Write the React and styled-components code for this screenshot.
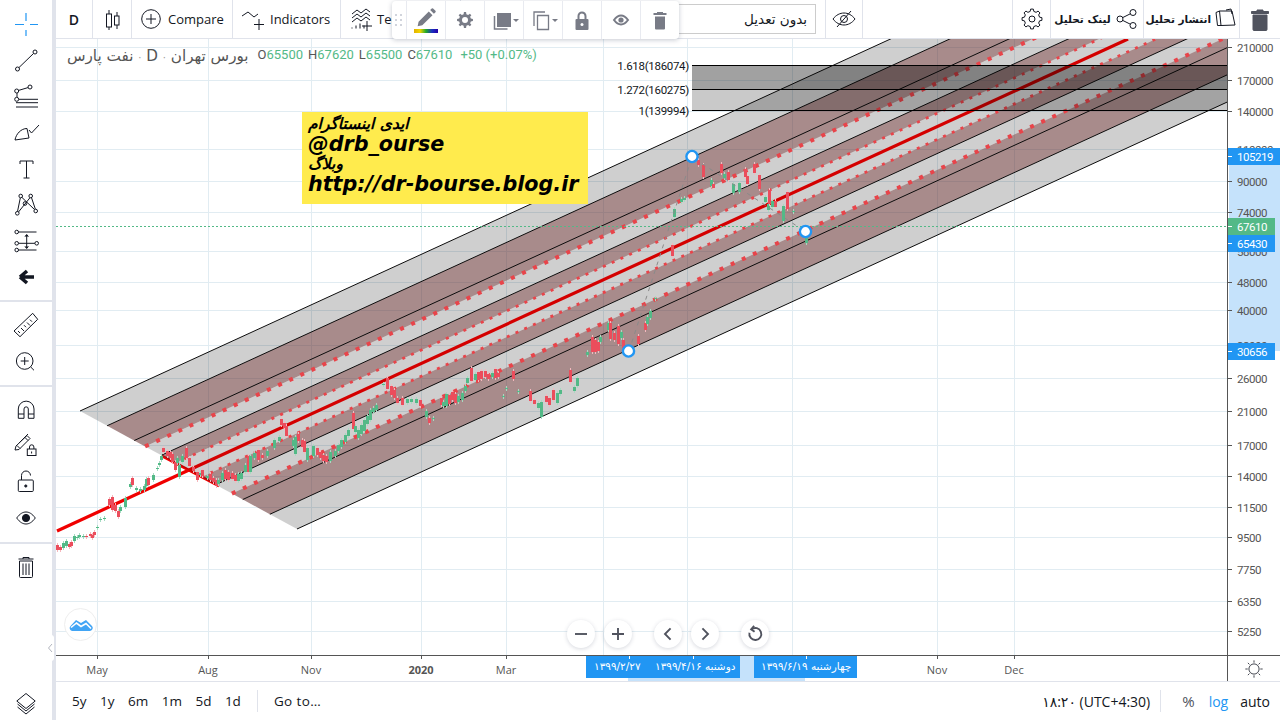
import React from 'react'
import styled, { createGlobalStyle } from 'styled-components'

const GREEN = '#53b987'
const RED = '#eb4d5c'
const BLUE = '#2196f3'

const priceTicks = [
  [47, '210000'], [80, '170000'], [111, '140000'], [149, '110000'], [181, '90000'], [212, '74000'],
  [251, '58000'], [282, '48000'], [310, '40000'], [345, '32000'], [378, '26000'], [411, '21000'],
  [445, '17000'], [476, '14000'], [507, '11500'], [537, '9500'], [569, '7750'], [601, '6350'], [631, '5250'],
]
const priceBadges = [
  { top: 148, h: 17, w: 53, color: BLUE, label: '105219' },
  { top: 218, h: 17, w: 47, color: GREEN, label: '67610' },
  { top: 235, h: 17, w: 47, color: BLUE, label: '65430' },
  { top: 343, h: 17, w: 47, color: BLUE, label: '30656' },
]
const timeTicks = [
  [97, 'May'], [208, 'Aug'], [311, 'Nov'], [421, '2020', true], [506, 'Mar'], [603, ''], [687, ''], [792, ''], [937, 'Nov'], [1014, 'Dec'],
]
const fibLevels = [
  [65.5, '1.618(186074)'],
  [89.5, '1.272(160275)'],
  [110.5, '1(139994)'],
]

// fork geometry: every channel line starts on the base line and runs up with the same slope
const SLOPE = 0.459
const basePoint = t => [80 + 217 * t, 411 + 118 * t]
const far = ([x, y]) => [x + 2000, y - 2000 * SLOPE]
const bands = [
  [0, 0.125, 'grey'], [0.125, 0.3, 'brown'], [0.3, 0.375, 'grey'], [0.375, 0.44, 'brown'], [0.44, 0.56, 'grey'],
  [0.56, 0.625, 'brown'], [0.625, 0.7, 'grey'], [0.7, 0.875, 'brown'], [0.875, 1, 'grey'],
]
const blackLines = [0, 0.125, 0.25, 0.375, 0.625, 0.75, 0.875, 1]
const dotted = [
  [0.3, 4, '4 8.2'], [0.44, 2.8, '3 6.6'], [0.56, 2.8, '3 6.6'], [0.7, 4, '4 8.2'],
]

const candles = [
  [57, 545, 550, 'r'], [60, 547, 550, 'r'], [63, 543, 548, 'g'], [66, 541, 546, 'g'], [69, 544, 547, 'r'], [71, 542, 546, 'r'],
  [74, 536, 541, 'g'], [77, 537, 538, 'g'], [79, 535, 537, 'g'], [83, 536, 537, 'g'], [86, 536, 537, 'r'], [90, 534, 536, 'r'],
  [92, 535, 538, 'r'], [94, 532, 535, 'r'], [97, 527, 528, 'g'], [100, 519, 520, 'g'], [104, 518, 519, 'g'],
  [109, 499, 505, 'r'], [112, 497, 510, 'r'], [115, 505, 511, 'r'], [118, 511, 517, 'r'], [120, 507, 511, 'g'], [125, 498, 507, 'g'],
  [130, 484, 487, 'g'], [132, 478, 485, 'r'], [136, 488, 490, 'g'], [140, 489, 491, 'g'], [144, 486, 490, 'g'], [146, 479, 486, 'g'],
  [148, 478, 485, 'r'], [153, 475, 480, 'g'], [157, 468, 469, 'g'], [159, 463, 465, 'g'], [161, 456, 460, 'g'], [163, 448, 452, 'r'],
  [167, 451, 456, 'r'], [170, 452, 458, 'r'], [172, 454, 462, 'r'], [175, 462, 470, 'r'], [177, 458, 463, 'g'], [179, 465, 477, 'g'],
  [182, 456, 462, 'g'], [186, 448, 458, 'r'], [189, 458, 466, 'r'], [193, 467, 471, 'r'], [197, 472, 480, 'r'], [200, 473, 475, 'g'],
  [202, 470, 476, 'r'], [207, 476, 478, 'g'], [210, 474, 480, 'r'], [213, 478, 482, 'r'], [216, 480, 486, 'r'], [218, 480, 484, 'g'],
  [222, 473, 480, 'g'], [225, 470, 479, 'r'], [228, 472, 480, 'r'], [232, 473, 479, 'r'], [235, 475, 481, 'r'], [238, 474, 481, 'g'],
  [241, 473, 479, 'g'], [245, 465, 472, 'g'], [248, 456, 472, 'r'], [250, 456, 472, 'g'], [254, 453, 458, 'g'], [258, 450, 460, 'r'],
  [262, 455, 458, 'r'], [267, 451, 456, 'g'], [274, 440, 448, 'g'], [279, 437, 441, 'g'], [281, 419, 425, 'r'], [284, 423, 428, 'r'],
  [286, 426, 436, 'r'], [293, 440, 446, 'g'], [295, 437, 454, 'g'], [298, 434, 441, 'r'], [302, 440, 447, 'r'], [304, 441, 452, 'r'],
  [307, 448, 460, 'g'], [313, 446, 456, 'g'], [317, 448, 455, 'r'], [320, 452, 458, 'r'], [323, 455, 461, 'r'], [326, 456, 462, 'r'],
  [330, 452, 461, 'g'], [335, 451, 456, 'g'], [338, 445, 451, 'g'], [341, 440, 447, 'g'], [345, 435, 442, 'g'],
  [348, 430, 436, 'g'], [353, 413, 429, 'r'], [355, 426, 432, 'g'], [358, 430, 438, 'g'], [361, 425, 434, 'g'], [364, 420, 431, 'g'],
  [367, 416, 424, 'g'], [370, 410, 420, 'g'], [373, 408, 412, 'g'], [376, 405, 410, 'g'], [383, 384, 385, 'g'], [387, 378, 389, 'r'],
  [391, 386, 395, 'r'], [394, 390, 398, 'r'], [397, 398, 403, 'r'], [402, 398, 405, 'r'], [407, 399, 403, 'g'], [411, 399, 402, 'g'],
  [416, 399, 403, 'g'], [420, 400, 406, 'r'], [426, 411, 417, 'g'], [429, 418, 423, 'r'], [433, 418, 419, 'g'],
  [441, 398, 405, 'r'], [443, 402, 406, 'g'], [446, 394, 406, 'g'], [449, 395, 404, 'r'], [452, 392, 400, 'r'], [455, 394, 403, 'r'],
  [458, 396, 402, 'g'], [462, 393, 400, 'g'], [465, 386, 391, 'g'], [467, 378, 383, 'g'], [471, 368, 381, 'r'], [475, 374, 380, 'g'],
  [478, 372, 380, 'r'], [481, 371, 379, 'r'], [485, 371, 377, 'r'], [488, 374, 379, 'r'], [492, 373, 377, 'g'], [495, 369, 378, 'r'],
  [498, 373, 377, 'r'], [503, 396, 397, 'g'], [506, 388, 389, 'g'], [513, 371, 379, 'r'], [518, 391, 392, 'g'],
  [530, 391, 401, 'r'], [534, 400, 404, 'r'], [538, 403, 408, 'g'], [541, 402, 417, 'g'], [546, 396, 402, 'r'], [549, 398, 405, 'r'],
  [553, 390, 400, 'r'], [557, 393, 403, 'g'], [560, 390, 394, 'g'], [570, 370, 382, 'r'], [574, 387, 391, 'g'], [577, 378, 386, 'g'],
  [587, 352, 355, 'g'], [592, 337, 352, 'r'], [595, 340, 352, 'r'], [598, 342, 351, 'r'], [600, 337, 342, 'g'],
  [608, 323, 330, 'g'], [610, 323, 339, 'r'], [614, 333, 340, 'r'], [618, 326, 344, 'r'], [621, 332, 338, 'g'], [623, 340, 348, 'r'],
  [638, 336, 344, 'r'], [645, 323, 330, 'r'], [647, 317, 324, 'g'], [650, 311, 318, 'g'], [655, 298, 299, 'g'],
  [672, 245, 256, 'r'], [674, 209, 217, 'g'], [681, 199, 202, 'g'], [684, 198, 200, 'g'], [698, 160, 165, 'r'],
  [703, 165, 177, 'r'], [711, 180, 186, 'g'], [713, 184, 188, 'r'], [721, 164, 173, 'r'], [724, 174, 178, 'g'], [728, 172, 180, 'r'],
  [733, 184, 193, 'g'], [739, 183, 192, 'g'], [745, 169, 177, 'r'], [747, 176, 184, 'r'], [754, 164, 173, 'r'], [759, 175, 189, 'r'],
  [765, 197, 202, 'g'], [768, 204, 210, 'g'], [769, 190, 204, 'r'], [772, 201, 207, 'g'], [775, 201, 207, 'r'], [783, 206, 221, 'g'],
  [787, 192, 209, 'r'], [793, 211, 212, 'g'], [806, 238, 243, 'g'],
]

const handles = [[692, 156.5], [628.5, 351], [805.5, 231.5]]

// toothed ring around the middle of a 28 box, for the two settings icons
const gearPath = (rOut, rIn, teeth = 8) => {
  const step = (Math.PI * 2) / teeth
  const pts = []
  for (let i = 0; i < teeth; i++) {
    const a = i * step
    const at = (r, da) => `${(14 + r * Math.cos(a + da)).toFixed(2)} ${(14 + r * Math.sin(a + da)).toFixed(2)}`
    pts.push(at(rIn, -step * 0.3), at(rOut, -step * 0.17), at(rOut, step * 0.17), at(rIn, step * 0.3))
  }
  return 'M' + pts.join('L') + 'Z'
}

const Icon = ({ size = 28, children, ...rest }) => (
  <Svg width={size} height={size} viewBox="0 0 28 28" fill="none" stroke="currentColor" strokeWidth="1" {...rest}>
    {children}
  </Svg>
)

const toolIcons = [
  <>
    <path d="M14 2v8M14 19v6M3 13.500h9M18 13.500h8" stroke={BLUE} strokeWidth="1.200" />
  </>,
  <>
    <circle cx="5.500" cy="22" r="2" />
    <circle cx="23" cy="5" r="2" />
    <path d="M7 20.500 21.500 6.500" />
  </>,
  <>
    <circle cx="4.700" cy="8" r="2" />
    <circle cx="18" cy="4" r="2" />
    <circle cx="4.700" cy="16.300" r="2" />
    <path d="M6.600 7.400 16 4.600M5 10v4M7 16.300h19M4 19.700h22M4 24h22" />
  </>,
  <>
    <path d="M3 21C4 15 9 9.500 15 9.500l2 9.500z" />
    <path d="M17 11l2.500 3L27 6" />
  </>,
  <>
    <path d="M8 9V6h13v3M14.500 6v17M11.500 23h6" />
  </>,
  <>
    <circle cx="8.700" cy="5" r="1.800" />
    <circle cx="18.700" cy="5" r="1.800" />
    <circle cx="13" cy="12.500" r="1.800" />
    <circle cx="5.300" cy="22.300" r="1.800" />
    <circle cx="23.700" cy="20" r="1.800" />
    <path d="M8.300 7 5.500 20.500M10 6.500 22.500 18.500M18 6.700 6.500 21M19.500 6.700 23.300 18" />
  </>,
  <>
    <circle cx="4.700" cy="5" r="1.800" />
    <circle cx="4.700" cy="16.300" r="1.800" />
    <circle cx="24.700" cy="16.300" r="1.800" />
    <circle cx="4.700" cy="23" r="1.800" />
    <path d="M6.500 5h18M6.500 16.300h16.400M6.500 23h18M14.700 8v12" />
    <path d="M13 9.500l1.700-2 1.700 2M13 19.500l1.700 2 1.700-2" fill="currentColor" />
  </>,
  <>
    <path d="M8 14 15 8M8 14l7 6M8 14h14" stroke="#131722" strokeWidth="3.600" />
  </>,
]
const viewIcons = [
  <>
    <path d="M2 20 20.700 2.300l5 6L8 25.700z" />
    <path d="M6 20l2 2M9 17l3 3M12 14.200l2 2M15 11.500l3 3M18 8.700l2 2" />
  </>,
  <>
    <circle cx="12.700" cy="14" r="8.300" />
    <path d="M18.700 20 22 23.300M12.700 10v8M8.700 14h8" />
  </>,
]
const lockIcons = [
  <>
    <path d="M6.300 22.300V13a7.850 7.850 0 0 1 15.700 0v9.300h-5.700V13a2.150 2.150 0 0 0-4.300 0v9.300zM6.300 18H12M16.300 18H22" />
  </>,
  <>
    <path d="M3 18l1-4L15 3.500l3 3L7 17.500zM13 5.500l3 3M5 13.500l3 3M7 11l9-9" />
    <rect x="15.300" y="17" width="8.700" height="6.500" />
    <path d="M17.500 17v-2a2.200 2.200 0 0 1 4.400 0v2M19.600 19.500v2" />
  </>,
  <>
    <rect x="6.300" y="12" width="15" height="11.500" rx="1" />
    <path d="M9.500 12V7.500a4.500 4.500 0 0 1 9 0" />
    <circle cx="13.800" cy="18" r="1.100" fill="currentColor" />
  </>,
  <>
    <path d="M4.700 14C8 9.500 11 8 14 8s6 1.500 9.300 6C20 18.500 17 20 14 20s-6-1.500-9.300-6z" />
    <circle cx="14" cy="14" r="3.600" fill="currentColor" />
  </>,
]
const TrashOutline = () => (
  <Icon>
    <path d="M7.500 8h13v15.500a1 1 0 0 1-1 1h-11a1 1 0 0 1-1-1zM6.500 6h15M11 6V4.500h6V6M11 10.500v11.500M14 10.500v11.500M17 10.500v11.500" />
  </Icon>
)
const Layers = () => (
  <Icon>
    <path d="M14 5.500 23.200 13 14 20.500 4.800 13z" />
    <path d="M5.500 16 14 23 22.500 16M5.500 19 14 26 22.500 19" />
  </Icon>
)

const App = () => {
  return (
    <Page>
      <GlobalStyle />
      <LeftBar>
        <ToolGroup>
          {toolIcons.map((icon, i) => (
            <ToolButton key={i}><Icon>{icon}</Icon></ToolButton>
          ))}
        </ToolGroup>
        <ToolGroup>
          {viewIcons.map((icon, i) => (
            <ToolButton key={i}><Icon>{icon}</Icon></ToolButton>
          ))}
        </ToolGroup>
        <ToolGroup>
          {lockIcons.map((icon, i) => (
            <ToolButton key={i}><Icon>{icon}</Icon></ToolButton>
          ))}
        </ToolGroup>
        <ToolGroup $last>
          <ToolButton><TrashOutline /></ToolButton>
        </ToolGroup>
        <ToolButton><Layers /></ToolButton>
        <CollapseTab>
          <svg width="6" height="12" viewBox="0 0 6 12" fill="none" stroke="#b2b5be"><path d="M5 2 1.500 6 5 10" /></svg>
        </CollapseTab>
      </LeftBar>

      <Main>
        <TopBar>
          <Seg $w={37}><Interval>D</Interval></Seg>
          <Seg $w={39}>
            <Icon>
              <path d="M11 5v20M19 7v17" />
              <rect x="8.500" y="9" width="5" height="13" fill="#fff" />
              <rect x="16.500" y="11" width="4.500" height="9" fill="#fff" />
            </Icon>
          </Seg>
          <Seg $w={101} $gap={3} $pad={5}>
            <Icon>
              <circle cx="14" cy="14" r="9.300" />
              <path d="M14 9v10M9 14h10" />
            </Icon>
            <BarLabel>Compare</BarLabel>
          </Seg>
          <Seg $w={108} $gap={3} $pad={6}>
            <Icon>
              <path d="M3 11l6-4 6 5 4-3M20 14v11M15 19.500h10" />
            </Icon>
            <BarLabel>Indicators</BarLabel>
          </Seg>
          <Seg $w={120} $gap={3} $pad={5}>
            <Icon>
              <path d="M6 9l5-4 4 3 5-4 4 3M6 13l5-4 4 3 5-4 4 3M6 17l5-4 4 3 5-4 4 3M6 23.500v-1M10 23.500v-3M14 23.500v-5M18 23.500v-3M21 16v10M16 21h10" />
            </Icon>
            <BarLabel>Templates</BarLabel>
          </Seg>
          <SaveField dir="rtl">بدون تعدیل</SaveField>
          <Seg $w={38} $first>
            <Icon>
              <path d="M3 14c3-4 7-6 11-6s8 2 11 6c-3 4-7 6-11 6s-8-2-11-6z" />
              <circle cx="14" cy="14" r="3.500" />
              <path d="M7 22 21 6" />
            </Icon>
          </Seg>
          <Filler />
          <Seg $w={39} $first>
            <Icon>
              <path d={gearPath(10, 7.800)} strokeLinejoin="round" />
              <circle cx="14" cy="14" r="3" />
            </Icon>
          </Seg>
          <Seg $w={94} $first $gap={1}>
            <ArabicBold>لینک تحلیل</ArabicBold>
            <Icon>
              <circle cx="21" cy="7.500" r="3" />
              <circle cx="21" cy="20.500" r="3" />
              <circle cx="8" cy="14" r="3" />
              <path d="M10.700 12.600l7.600-3.800M10.700 15.400l7.600 3.800" />
            </Icon>
          </Seg>
          <Seg $w={97} $first $end>
            <ArabicBold>انتشار تحلیل</ArabicBold>
            <Icon>
              <path d="M5 7.500 8.500 6H21l3 14-14 .500H6.500zM8.500 6l1.500 14.500M15 5l5-1 1 5" />
            </Icon>
          </Seg>
          <Seg $w={41} $first>
            <Icon>
              <path d="M7 10h14v14.500a1 1 0 0 1-1 1H8a1 1 0 0 1-1-1zM5.500 6.500h17V8.500h-17zM11 6.500V5h6v1.500" fill="#50535e" stroke="#50535e" />
            </Icon>
          </Seg>
        </TopBar>

        <FloatBar>
          <DragHandle>
            <svg width="8" height="14" viewBox="0 0 8 14" fill="#d1d4dc">
              {[0, 1].map(c => [0, 1, 2].map(r => <rect key={c + '-' + r} x={c * 5} y={r * 5 + 1} width="2" height="2" />))}
            </svg>
          </DragHandle>
          <FloatCell>
            <PaintStack>
              <Icon size={26}>
                <path d="M6 19l11-11 4 4-11 11-5 1zM18.500 6.500l1.700-1.700a1 1 0 0 1 1.400 0l2.600 2.600a1 1 0 0 1 0 1.400L22.500 10.500z" fill="#787b86" stroke="none" />
              </Icon>
              <Rainbow />
            </PaintStack>
          </FloatCell>
          <FloatCell>
            <Icon>
              <path d={gearPath(8, 6)} fill="#787b86" stroke="none" />
              <circle cx="14" cy="14" r="3" fill="#fff" stroke="none" />
            </Icon>
          </FloatCell>
          <FloatCell>
            <Icon>
              <path d="M8 7h14v14H8z" fill="#787b86" stroke="none" />
              <path d="M5.500 10v13h13" stroke="#787b86" strokeWidth="1.500" />
            </Icon>
            <Caret />
          </FloatCell>
          <FloatCell>
            <Icon>
              <path d="M9.500 9.500h11v14h-11z" stroke="#787b86" strokeWidth="1.300" />
              <path d="M6 20V6h11" stroke="#787b86" strokeWidth="1.300" />
            </Icon>
            <Caret />
          </FloatCell>
          <FloatCell>
            <Icon>
              <path d="M8.500 13h11a1 1 0 0 1 1 1v9a1 1 0 0 1-1 1h-11a1 1 0 0 1-1-1v-9a1 1 0 0 1 1-1z" fill="#787b86" stroke="none" />
              <path d="M10.500 13v-3a3.500 3.500 0 0 1 7 0v3" stroke="#787b86" strokeWidth="2" />
              <circle cx="14" cy="18.500" r="1.500" fill="#fff" stroke="none" />
            </Icon>
          </FloatCell>
          <FloatCell>
            <Icon>
              <path d="M7 14c2.200-3 4.500-4.500 7-4.500s4.800 1.500 7 4.500c-2.200 3-4.500 4.500-7 4.500s-4.800-1.500-7-4.500z" stroke="#787b86" strokeWidth="2" />
              <circle cx="14" cy="14" r="2.600" fill="#787b86" stroke="none" />
            </Icon>
          </FloatCell>
          <FloatCell>
            <Icon>
              <path d="M9 10.500h10v12a1 1 0 0 1-1 1h-8a1 1 0 0 1-1-1zM7.500 7h13v2h-13zM11 7V6h6v1" fill="#787b86" stroke="none" />
            </Icon>
          </FloatCell>
        </FloatBar>

        <ChartRow>
          <Pane>
            <ChartSvg viewBox="56 39 1171 616" width="1171" height="616">
              {timeTicks.map(([x]) => (
                <path key={x} d={`M${x + 0.5} 39V655`} stroke="#e1ecf2" />
              ))}
              {priceTicks.map(([y]) => (
                <path key={y} d={`M56 ${y + 0.5}H1227`} stroke="#e1ecf2" />
              ))}
              <path d="M57 531 189 470" stroke="#f00000" strokeWidth="3.200" />
              <path d="M162 456 219 486" stroke="#f00000" strokeWidth="2.800" />
              {bands.map(([a, b, tone]) => {
                const p1 = basePoint(a)
                const p2 = basePoint(b)
                return (
                  <polygon
                    key={a}
                    points={[p1, far(p1), far(p2), p2].map(p => p.join(',')).join(' ')}
                    fill={tone === 'grey' ? 'rgba(0,0,0,.19)' : 'rgba(90,35,35,.53)'}
                  />
                )
              })}
              {blackLines.map(t => {
                const p = basePoint(t)
                const q = far(p)
                return <path key={t} d={`M${p[0]} ${p[1]}L${q[0]} ${q[1]}`} stroke="#0c0c0c" />
              })}
              {dotted.map(([t, w, dash]) => {
                const p = basePoint(t)
                const q = far(p)
                return <path key={t} d={`M${p[0]} ${p[1]}L${q[0]} ${q[1]}`} stroke="#e8444a" strokeWidth={w} strokeDasharray={dash} />
              })}
              <path d="M189 470 1128 39" stroke="#d40000" strokeWidth="3.200" />
              {candles.map(([x, top, bottom, c]) => (
                <g key={x + '-' + top}>
                  <path d={`M${x + 0.5} ${top - 2}V${bottom + 2}`} stroke={c === 'g' ? '#a5dcc2' : '#f6b7bd'} />
                  <rect x={x - 1} y={top} width="3" height={bottom - top} fill={c === 'g' ? GREEN : RED} />
                </g>
              ))}
              <path d="M629 351 692 157 806 232" fill="none" stroke="#8a8a8a" strokeDasharray="4 5" />
              <path d="M56 226.500H1227" stroke={GREEN} strokeDasharray="2 2" />
              <rect x="692" y="66" width="535" height="23.500" fill="rgba(0,0,0,.37)" />
              <rect x="692" y="89.500" width="535" height="21" fill="rgba(0,0,0,.21)" />
              {fibLevels.map(([y, label]) => (
                <g key={y}>
                  <path d={`M692 ${y}H1227`} stroke="#000" />
                  <FibLabel x="689" y={y + 4.500} textAnchor="end">{label}</FibLabel>
                </g>
              ))}
              {handles.map(([cx, cy]) => (
                <circle key={cx} cx={cx} cy={cy} r="5.600" fill="#fff" stroke={BLUE} strokeWidth="2.400" />
              ))}
            </ChartSvg>

            <Legend>
              <LegendTitle dir="rtl">بورس تهران <small>·</small> D <small>·</small> نفت پارس</LegendTitle>
              <LegendValues>
                <span>O<b>65500</b></span>
                <span>H<b>67620</b></span>
                <span>L<b>65500</b></span>
                <span>C<b>67610</b></span>
                <b>+50 (+0.07%)</b>
              </LegendValues>
            </Legend>

            <Note>
              <NoteFa dir="rtl">ایدی اینستاگرام</NoteFa>
              <NoteEn>@drb_ourse</NoteEn>
              <NoteFa dir="rtl">وبلاگ</NoteFa>
              <NoteEn>http://dr-bourse.blog.ir</NoteEn>
            </Note>

            <CloudButton>
              <svg width="26" height="20" viewBox="0 0 26 20" fill="#42a5f5">
                <path d="M4 16a3 3 0 0 1-1.500-5L8 5l5 3 5-3 6 6a3 3 0 0 1-2 5z" />
                <path d="M3 12.500 8.500 8 13 11.500 18 8.500 23 13.500" fill="none" stroke="#fff" strokeWidth="1.600" />
              </svg>
            </CloudButton>

            <Controls>
              <ControlGroup>
                <RoundBtn><Glyph><path d="M7 14h14" /></Glyph></RoundBtn>
                <RoundBtn><Glyph><path d="M7 14h14M14 7v14" /></Glyph></RoundBtn>
              </ControlGroup>
              <ControlGroup>
                <RoundBtn><Glyph><path d="M17 7.500 10.500 14l6.500 6.500" /></Glyph></RoundBtn>
                <RoundBtn><Glyph><path d="M11 7.500 17.500 14 11 20.500" /></Glyph></RoundBtn>
              </ControlGroup>
              <RoundBtn>
                <Glyph>
                  <path d="M10 8.500a7 7 0 1 1-2.500 4" />
                  <path d="M13 4.500 9.500 8.500l4 3" />
                </Glyph>
              </RoundBtn>
            </Controls>
          </Pane>

          <PriceAxis viewBox="1227 39 53 616" width="53" height="616">
            <rect x="1228" y="156" width="52" height="195" fill="#c5e2fb" />
            {priceTicks.map(([y, label]) => (
              <g key={y}>
                <path d={`M1227 ${y + 0.5}h4`} stroke="#555" />
                <AxisText x="1236" y={y + 4.500}>{label}</AxisText>
              </g>
            ))}
            {priceBadges.map(b => (
              <g key={b.label}>
                <rect x="1227" y={b.top} width={b.w} height={b.h} fill={b.color} />
                <path d={`M1227 ${b.top + 8.500}h4`} stroke="#fff" />
                <AxisText x="1236" y={b.top + 13} $light>{b.label}</AxisText>
              </g>
            ))}
          </PriceAxis>
        </ChartRow>

        <TimeRow>
          <TimeAxis viewBox="56 656 1171 25" width="1171" height="25">
            <rect x="628" y="656" width="177" height="25" fill="#c5e2fb" />
            {timeTicks.map(([x, label, bold]) => (
              <g key={x}>
                <path d={`M${x + 0.5} 656v3`} stroke="#555" />
                <TimeText x={x} y="674" textAnchor="middle" $bold={bold}>{label}</TimeText>
              </g>
            ))}
            <rect x="586" y="656" width="154" height="22" fill={BLUE} />
            <rect x="754" y="656" width="103" height="22" fill={BLUE} />
            <DateText x="594" y="670">۱۳۹۹/۲/۲۷</DateText>
            <DateText x="655" y="670">۱۳۹۹/۴/۱۶ دوشنبه</DateText>
            <DateText x="761" y="670">۱۳۹۹/۶/۱۹ چهارشنبه</DateText>
            <path d="M629.500 656v3M693.500 656v3M806.500 656v3" stroke="#fff" />
          </TimeAxis>
          <SettingsCell>
            <Icon size={22}>
              <circle cx="14" cy="14" r="6.500" />
              <path d="M14 3v3M14 22v3M3 14h3M22 14h3M6.200 6.200l2 2M19.800 19.800l2 2M21.800 6.200l-2 2M8.200 19.800l-2 2" />
            </Icon>
          </SettingsCell>
        </TimeRow>

        <BottomBar>
          <Ranges>
            <RangeBtn>5y</RangeBtn>
            <RangeBtn>1y</RangeBtn>
            <RangeBtn>6m</RangeBtn>
            <RangeBtn>1m</RangeBtn>
            <RangeBtn>5d</RangeBtn>
            <RangeBtn>1d</RangeBtn>
          </Ranges>
          <Divider />
          <GoTo>Go to…</GoTo>
          <Filler />
          <Clock>۱۸:۲۰ (UTC+4:30)</Clock>
          <Divider />
          <Percent>%</Percent>
          <LogBtn>log</LogBtn>
          <AutoBtn>auto</AutoBtn>
        </BottomBar>
      </Main>
    </Page>
  )
}

export default App

const GlobalStyle = createGlobalStyle`
  html, body {
    margin: 0;
    padding: 0;
    background: #fff;
  }
  body {
    font-family: "Open Sans", "DejaVu Sans", sans-serif;
    overflow: hidden;
  }
`

const Page = styled.div`
  width: 1280px;
  height: 720px;
  display: flex;
  overflow: hidden;
  color: #131722;
`

const Svg = styled.svg`
  display: block;
  flex: none;
`

const LeftBar = styled.aside`
  position: relative;
  width: 52px;
  height: 720px;
  flex: none;
  padding-bottom: 19px;
  box-sizing: content-box;
  border-right: 4px solid #e0e3eb;
  display: flex;
  flex-direction: column;
  align-items: center;
  background: #fff;
`

const ToolGroup = styled.div`
  width: 100%;
  display: flex;
  flex-direction: column;
  align-items: center;
  flex: ${p => (p.$last ? 1 : 'none')};
  padding: 5px 0 6px;
  border-bottom: ${p => (p.$last ? 'none' : '2px solid #e0e3eb')};
  &:first-child {
    padding-top: 7px;
    padding-bottom: 5px;
  }
`

const ToolButton = styled.div`
  width: 36px;
  height: 36px;
  flex: none;
  display: flex;
  align-items: center;
  justify-content: center;
  color: #131722;
`

const CollapseTab = styled.div`
  position: absolute;
  left: 46px;
  top: 635px;
  width: 8px;
  height: 26px;
  background: #fff;
  border-radius: 3px;
  display: flex;
  align-items: center;
  justify-content: center;
`

const Main = styled.main`
  position: relative;
  flex: 1;
  min-width: 0;
  display: flex;
  flex-direction: column;
`

const TopBar = styled.header`
  height: 38px;
  flex: none;
  display: flex;
  align-items: stretch;
  border-bottom: 1px solid #e0e3eb;
  background: #fff;
`

const Seg = styled.div`
  width: ${p => p.$w}px;
  flex: none;
  box-sizing: border-box;
  display: flex;
  align-items: center;
  justify-content: ${p => (p.$end ? 'flex-end' : p.$pad ? 'flex-start' : 'center')};
  gap: ${p => p.$gap || 0}px;
  padding-left: ${p => p.$pad || 0}px;
  border-right: 1px solid #e0e3eb;
  border-left: ${p => (p.$first ? '1px solid #e0e3eb' : 'none')};
  margin-left: ${p => (p.$first ? '-1px' : '0')};
  &:last-child {
    border-right: none;
  }
`

const Interval = styled.span`
  font-size: 14px;
  font-weight: 600;
  color: #131722;
`

const BarLabel = styled.span`
  font-size: 13px;
  font-weight: 500;
  color: #131722;
  white-space: nowrap;
`

const ArabicBold = styled.span`
  font-family: "DejaVu Sans", sans-serif;
  font-size: 10.500px;
  font-weight: 700;
  white-space: nowrap;
  color: #131722;
`

const SaveField = styled.div`
  width: 351px;
  margin: 4px 10px 4px 4px;
  box-sizing: border-box;
  border: 1px solid #ccc;
  display: flex;
  align-items: center;
  padding-right: 8px;
  font-family: "DejaVu Sans", sans-serif;
  font-size: 13.500px;
  color: #131722;
`

const Filler = styled.div`
  flex: 1;
`

const FloatBar = styled.div`
  position: absolute;
  left: 336px;
  top: 1px;
  height: 38px;
  display: flex;
  background: #fff;
  border-radius: 4px;
  box-shadow: 0 1px 5px rgba(50, 60, 90, 0.28);
  z-index: 5;
`

const DragHandle = styled.div`
  width: 14px;
  display: flex;
  align-items: center;
  justify-content: center;
  border-right: 1px solid #e8eaf0;
`

const FloatCell = styled.div`
  width: 38px;
  display: flex;
  align-items: center;
  justify-content: center;
  border-right: 1px solid #e8eaf0;
  position: relative;
  &:last-child {
    border-right: none;
  }
`

const PaintStack = styled.div`
  display: flex;
  flex-direction: column;
  align-items: center;
  margin-top: -3px;
`

const Rainbow = styled.div`
  width: 24px;
  height: 4px;
  margin-top: -1px;
  background: linear-gradient(90deg, #e2b100 0%, #f2d500 25%, #1faa2a 50%, #1a2fc0 75%, #2400a8 100%);
`

const Caret = styled.span`
  margin-left: -4px;
  width: 0;
  height: 0;
  border-left: 3px solid transparent;
  border-right: 3px solid transparent;
  border-top: 3px solid #787b86;
`

const ChartRow = styled.div`
  display: flex;
  height: 616px;
  flex: none;
  border-bottom: 1px solid #555;
`

const Pane = styled.div`
  position: relative;
  width: 1171px;
  flex: none;
  overflow: hidden;
  border-right: 1px solid #555;
  box-sizing: content-box;
`

const ChartSvg = styled.svg`
  display: block;
`

const FibLabel = styled.text`
  font-family: Roboto, sans-serif;
  font-size: 11.500px;
  letter-spacing: -0.300px;
  fill: #131722;
`

const Legend = styled.div`
  position: absolute;
  left: 11px;
  top: 5px;
  display: flex;
  align-items: center;
  gap: 9px;
`

const LegendTitle = styled.div`
  font-family: "DejaVu Sans", sans-serif;
  font-size: 15.200px;
  color: #555;
  margin-top: 3px;
  small {
    font-size: 10px;
    color: #999;
  }
`

const LegendValues = styled.div`
  display: flex;
  gap: 5px;
  font-family: Roboto, sans-serif;
  font-size: 13px;
  color: #555;
  b {
    font-weight: 400;
    color: ${GREEN};
  }
  > b {
    margin-left: 3px;
  }
`

const Note = styled.div`
  position: absolute;
  left: 246px;
  top: 73px;
  width: 286px;
  height: 92px;
  box-sizing: border-box;
  padding: 2px 6px;
  background: #ffeb4d;
  color: #000;
  font-family: "DejaVu Sans", sans-serif;
  font-weight: 700;
  font-style: italic;
`

const NoteFa = styled.div`
  font-size: 15.500px;
  line-height: 20px;
  width: max-content;
`

const NoteEn = styled.div`
  font-size: 20.700px;
  line-height: 20px;
  white-space: nowrap;
`

const CloudButton = styled.div`
  position: absolute;
  left: 8px;
  top: 569px;
  width: 33px;
  height: 33px;
  border-radius: 50%;
  background: #fff;
  border: 1px solid #eee;
  box-sizing: border-box;
  display: flex;
  align-items: center;
  justify-content: center;
`

const Controls = styled.div`
  position: absolute;
  left: 511px;
  top: 581px;
  display: flex;
  gap: 22px;
`

const ControlGroup = styled.div`
  display: flex;
  gap: 9px;
`

const RoundBtn = styled.div`
  width: 28px;
  height: 28px;
  border-radius: 50%;
  background: #fff;
  box-shadow: 0 1px 4px rgba(50, 60, 90, 0.2);
  display: flex;
  align-items: center;
  justify-content: center;
`

const Glyph = styled.svg.attrs({ viewBox: '0 0 28 28', width: 24, height: 24, fill: 'none', stroke: '#50535e', strokeWidth: 2.200 })`
  display: block;
`

const PriceAxis = styled.svg`
  display: block;
  flex: none;
  margin-left: 0;
`

const AxisText = styled.text`
  font-family: Roboto, sans-serif;
  font-size: 11.500px;
  letter-spacing: -0.450px;
  fill: ${p => (p.$light ? '#fff' : '#555')};
`

const TimeRow = styled.div`
  display: flex;
  height: 26px;
  flex: none;
  border-bottom: 1px solid #e0e3eb;
  box-sizing: border-box;
`

const TimeAxis = styled.svg`
  display: block;
  flex: none;
`

const TimeText = styled.text`
  font-family: "Open Sans", sans-serif;
  font-size: 11px;
  font-weight: ${p => (p.$bold ? 700 : 400)};
  fill: #555;
`

const DateText = styled.text`
  font-family: "DejaVu Sans", sans-serif;
  font-size: 10.500px;
  fill: #fff;
`

const SettingsCell = styled.div`
  flex: 1;
  border-left: 1px solid #555;
  display: flex;
  align-items: center;
  justify-content: center;
`

const BottomBar = styled.footer`
  flex: 1;
  display: flex;
  align-items: center;
  padding: 0 10px 0 16px;
  font-size: 13.500px;
  color: #131722;
`

const Ranges = styled.div`
  display: flex;
  gap: 13.500px;
`

const RangeBtn = styled.span`
  white-space: nowrap;
`

const Divider = styled.span`
  width: 1px;
  height: 22px;
  background: #e0e3eb;
  margin: 0 16px;
`

const GoTo = styled.span`
  letter-spacing: 0.400px;
`

const Clock = styled.span`
  font-size: 14px;
  white-space: nowrap;
  margin-right: -6px;
`

const Percent = styled.span`
  margin-left: 5px;
  font-size: 15px;
  color: #50535e;
`

const LogBtn = styled.span`
  margin-left: 14px;
  color: ${BLUE};
  font-size: 14px;
`

const AutoBtn = styled.span`
  margin-left: 12px;
  font-size: 14px;
`
